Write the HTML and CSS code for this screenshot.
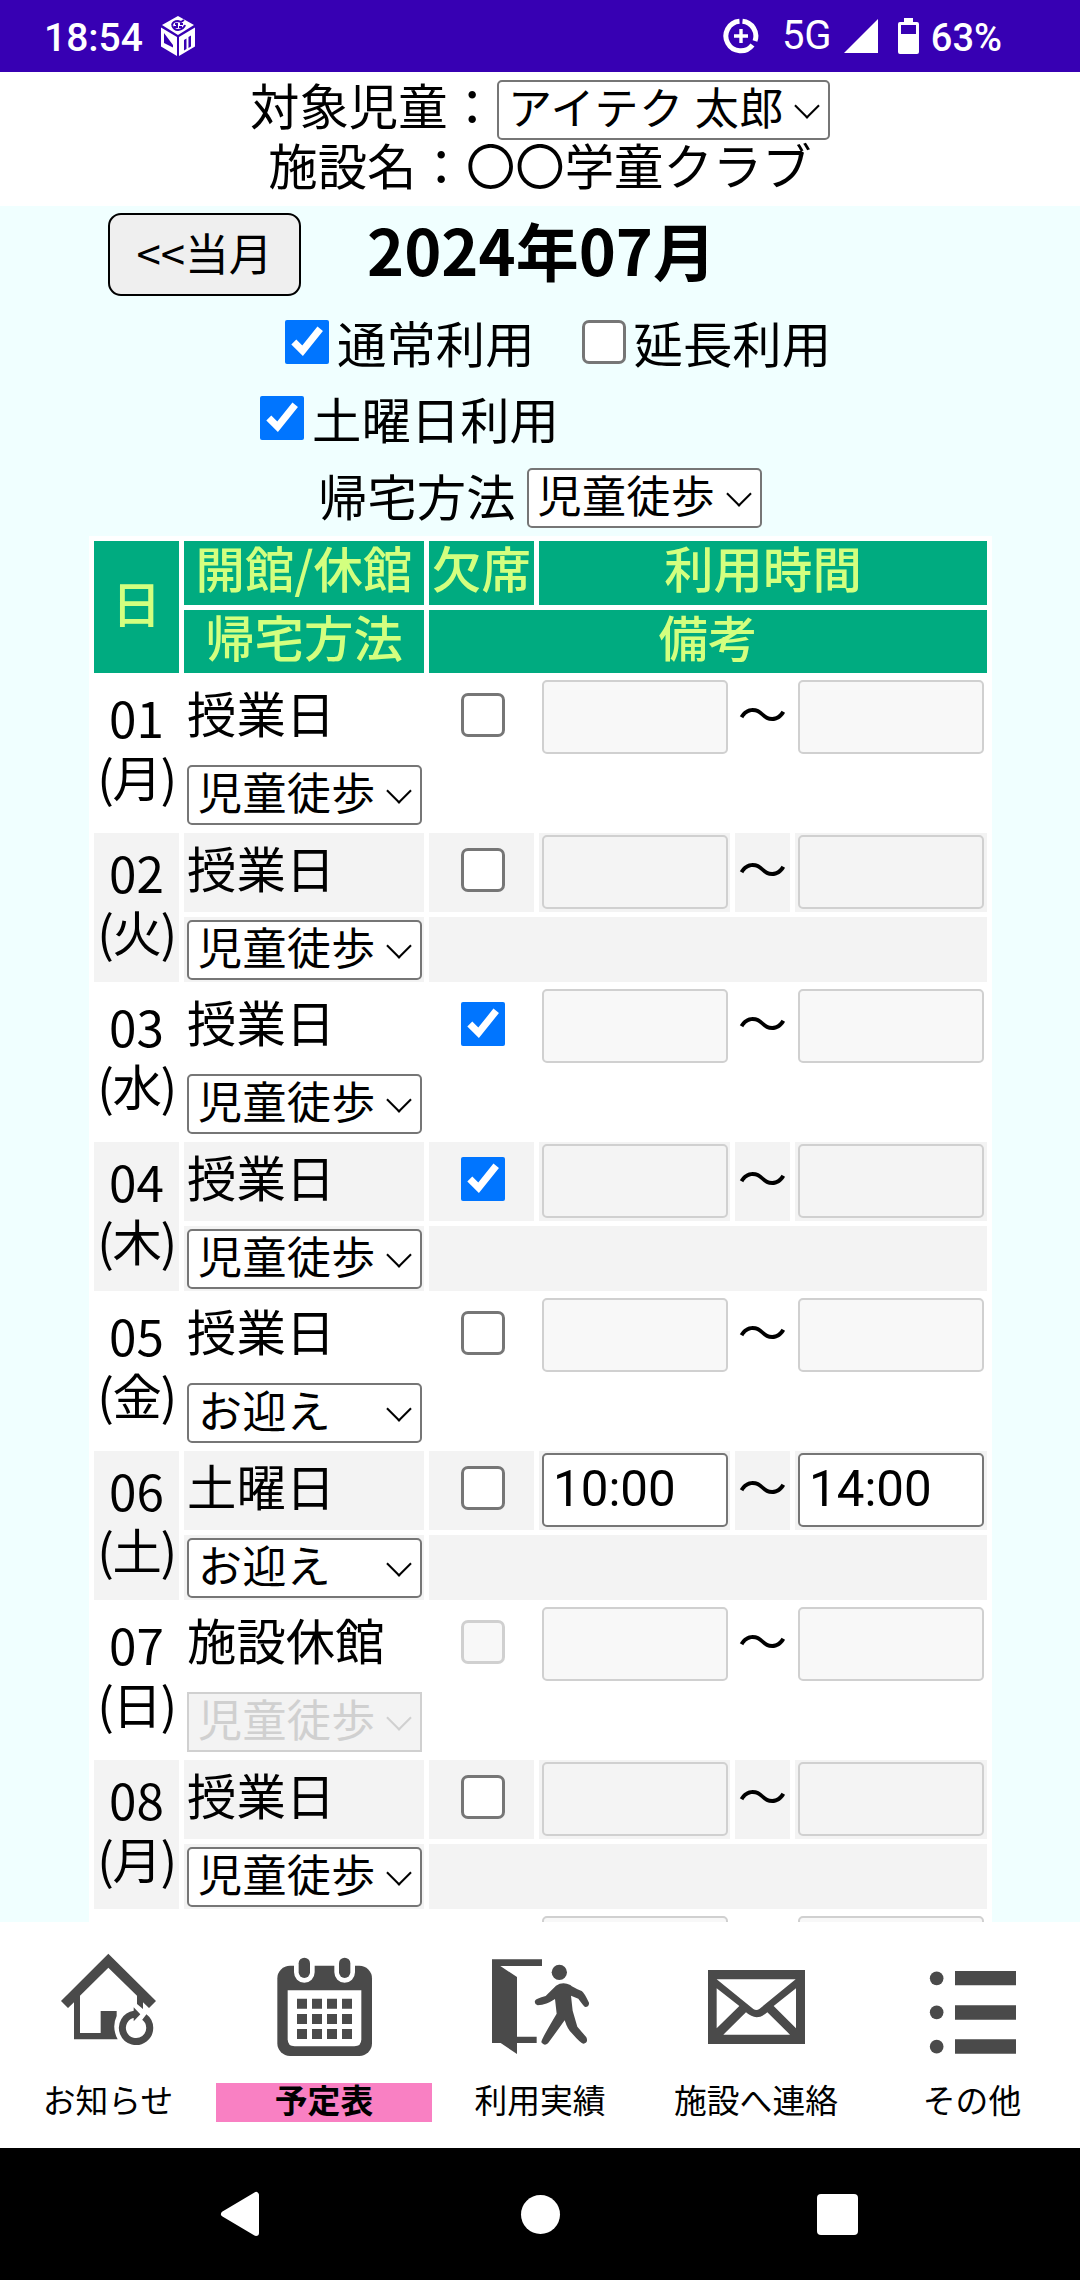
FILE: index.html
```html
<!DOCTYPE html>
<html lang="ja">
<head>
<meta charset="utf-8">
<meta name="viewport" content="width=device-width, initial-scale=1.0">
<title>予定表</title>
<link rel="stylesheet" href="styles.css">
</head>
<body>
<div class="statusbar">
  <span class="clock">18:54</span>
  <svg class="ic-cube" viewBox="0 0 36 40" width="36" height="40">
    <path fill="#fff" d="M18 0 34 9 18 19 2 9zM1 11.500 17 21v19L1 30.500zM35 11.500 19 21v19l16-9.500z"/>
    <path fill="#3700b3" d="M4 17v10l9 4.500V29zM24 24l2.500-1.500V33L24 34.500zM28.500 21l2.500-1.500v11L28.500 32z"/>
    <path fill="none" stroke="#3700b3" stroke-width="2" d="M12 9q1-4 6-4l3 1 3-2M12 9q2 5 6 5 6-1 7-5M15 8h2v3h-3M20 8h3M19 11h3"/>
  </svg>
  <svg class="ic-data" viewBox="0 0 36 36" width="36" height="36">
    <g fill="none" stroke="#fff">
      <path stroke-width="5" d="M16.500 3.300A14.800 14.800 0 1 0 29.500 27M19.500 3.300A14.800 14.800 0 0 1 32 23"/>
      <path stroke-width="3.400" d="M18 11v14M11 18h14"/>
    </g>
  </svg>
  <span class="net">5G</span>
  <svg class="ic-signal" viewBox="0 0 34 34" width="34" height="34"><path fill="#fff" d="M34 0v34H0z"/></svg>
  <svg class="ic-battery" viewBox="0 0 21 36" width="21" height="36">
    <path fill="#fff" fill-rule="evenodd" d="M6 0h9v4h4q2 0 2 2v28q0 2-2 2H2q-2 0-2-2V6q0-2 2-2h4zM3 7v9h15V7z"/>
  </svg>
  <span class="percent">63%</span>
</div>

<header class="head">
  <div class="head-line"><span>対象児童：</span><span class="select select-child"><select><option>アイテク 太郎</option></select></span></div>
  <div class="head-line"><span>施設名：〇〇学童クラブ</span></div>
</header>

<main class="main">
  <div class="month">
    <button class="btn-month">&lt;&lt;当月</button>
    <h1>2024年07月</h1>
  </div>
  <div class="option">
    <input type="checkbox" checked><label>通常利用</label>
    <input type="checkbox" class="second"><label>延長利用</label>
  </div>
  <div class="option option-sat">
    <input type="checkbox" checked><label>土曜日利用</label>
  </div>
  <div class="howto">
    <label>帰宅方法</label>
    <span class="select"><select><option>児童徒歩</option><option>お迎え</option></select></span>
  </div>

  <div class="schedule" id="schedule">
    <div class="th day">日</div>
    <div class="th">開館/休館</div>
    <div class="th">欠席</div>
    <div class="th time">利用時間</div>
    <div class="th">帰宅方法</div>
    <div class="th note">備考</div>
  </div>
</main>

<nav class="tabs">
  <a class="tab">
    <svg viewBox="0 99 648 480" width="216" height="160">
      <path fill="#4a4a4a" d="M325 191 468 333 447 354 429 337V357L411 342V317L325 233 240 317V429H302V363H350V378Q334 412 353 448H222V337L204 354 183 333z"/>
      <path fill="none" stroke="#4a4a4a" stroke-width="21" d="M433 381A41 41 0 1 1 403 373"/>
      <path fill="#4a4a4a" d="M401 352 421 373 401 394z"/>
    </svg>
    <span>お知らせ</span>
  </a>
  <a class="tab active">
    <svg viewBox="648 99 648 480" width="216" height="160">
      <rect x="832" y="227" width="284" height="271" rx="38" fill="#4a4a4a"/>
      <path fill="#fff" d="M863 301h221v147q0 21-21 21H884q-21 0-21-21z"/>
      <path fill="#fff" d="M882 220h62v27a31 31 0 0 1-62 0zM1003 220h62v27a31 31 0 0 1-62 0z"/>
      <rect x="896" y="203" width="34" height="61" rx="17" fill="#4a4a4a"/>
      <rect x="1017" y="203" width="34" height="61" rx="17" fill="#4a4a4a"/>
      <path fill="#4a4a4a" d="M891 326h30v30h-30zm45 0h30v30h-30zm45 0h30v30h-30zm45 0h30v30h-30zM891 372h30v30h-30zm45 0h30v30h-30zm45 0h30v30h-30zm45 0h30v30h-30zM891 417h30v30h-30zm45 0h30v30h-30zm45 0h30v30h-30zm45 0h30v30h-30z"/>
    </svg>
    <span>予定表</span>
  </a>
  <a class="tab">
    <svg viewBox="96 99 648 480" width="216" height="160">
      <path fill="#4a4a4a" d="M276 208H426V228H301L351 261V440H410V459H351V492L302 459H276z"/>
      <circle cx="478" cy="247" r="23" fill="#4a4a4a"/>
      <path fill="#4a4a4a" d="M468 287Q488 274 511 285Q517 291 545 303Q552 307 567 338Q568 351 556 351Q552 350 535 326L513 317 518 362 532 410 559 442Q566 458 550 461Q543 461 515 429Q503 419 494 391L444 460Q433 470 424 457Q422 451 470 371L465 327Q440 344 413 346Q402 343 405 332Q408 326 437 318z"/>
    </svg>
    <span>利用実績</span>
  </a>
  <a class="tab">
    <svg viewBox="744 99 648 480" width="216" height="160">
      <path fill="#4a4a4a" fill-rule="evenodd" d="M924 240H1215V462H924zM950 268 1060 357Q1069 363 1078 357L1187 268zM950 295V415L1018 348zM1188 295 1121 348 1188 415zM970 434H1170L1102 367Q1070 396 1038 367z"/>
    </svg>
    <span>施設へ連絡</span>
  </a>
  <a class="tab">
    <svg viewBox="252 99 648 480" width="216" height="160" fill="#4a4a4a">
      <circle cx="470" cy="265" r="20.500"/><path d="M525 243h183v43H525z"/>
      <circle cx="470" cy="367" r="20.500"/><path d="M525 346h183v43H525z"/>
      <circle cx="470" cy="470" r="20.500"/><path d="M525 448h183v43H525z"/>
    </svg>
    <span>その他</span>
  </a>
</nav>

<div class="softkeys">
  <svg viewBox="0 0 40 46" width="40" height="46"><path fill="#fff" stroke="#fff" stroke-width="6" stroke-linejoin="round" d="M4 23 36 4v38z"/></svg>
  <span class="key-home"></span>
  <span class="key-recent"></span>
</div>

<script>
  const days = [
    { date: "01", week: "月", kind: "授業日", how: "児童徒歩" },
    { date: "02", week: "火", kind: "授業日", how: "児童徒歩" },
    { date: "03", week: "水", kind: "授業日", how: "児童徒歩", absent: true },
    { date: "04", week: "木", kind: "授業日", how: "児童徒歩", absent: true },
    { date: "05", week: "金", kind: "授業日", how: "お迎え" },
    { date: "06", week: "土", kind: "土曜日", how: "お迎え", from: "10:00", to: "14:00" },
    { date: "07", week: "日", kind: "施設休館", how: "児童徒歩", closed: true },
    { date: "08", week: "月", kind: "授業日", how: "児童徒歩" }
  ];

  function timeInput(value) {
    return value ? `<input type="text" value="${value}">` : `<input type="text" disabled>`;
  }

  const schedule = document.getElementById("schedule");
  days.forEach((d, i) => {
    const alt = i % 2 ? " alt" : "";
    const dis = d.closed ? "disabled" : "";
    schedule.insertAdjacentHTML("beforeend", `
      <div class="td day${alt}"><div>${d.date}</div><div class="week">(${d.week})</div></div>
      <div class="td kind${alt}">${d.kind}</div>
      <div class="td absent${alt}"><input type="checkbox" ${d.absent ? "checked" : ""} ${dis}></div>
      <div class="td${alt}">${timeInput(d.from)}</div>
      <div class="td tilde${alt}">～</div>
      <div class="td${alt}">${timeInput(d.to)}</div>
      <div class="td how${alt}"><span class="select ${dis}"><select ${dis}><option>${d.how}</option></select></span></div>
      <div class="td note${alt}"></div>`);
  });
  // top edge of the next day's row
  schedule.insertAdjacentHTML("beforeend", `
    <div class="next-from">${timeInput()}</div>
    <div class="next-to">${timeInput()}</div>`);
</script>
</body>
</html>
```
FILE: styles.css
```css
* {
  box-sizing: border-box;
}
body {
  margin: 0;
  width: 1080px;
  height: 2280px;
  display: flex;
  flex-direction: column;
  overflow: hidden;
  background: #fff;
  color: #000;
  font-family: "Noto Sans CJK JP", sans-serif;
  font-size: 49.4px;
  line-height: 60px;
}

/* status bar */
.statusbar {
  height: 72px;
  flex-shrink: 0;
  display: flex;
  align-items: center;
  padding: 0 78px 0 44px;
  background: #3700b3;
  color: #fff;
  font-family: Roboto, sans-serif;
  font-size: 39px;
  font-weight: 500;
}
.clock { width: 116px; padding-top: 3px; }
.ic-data { margin-left: 527px; }
.net { width: 62px; margin-left: 23px; font-weight: 400; font-size: 40px; }
.ic-battery { margin-left: 20px; }
.percent { margin-left: 12px; padding-top: 3px; font-size: 38px; }

/* header */
.head {
  height: 134px;
  flex-shrink: 0;
  padding-top: 2px;
}
.head-line {
  height: 60px;
  display: flex;
  justify-content: center;
}
.head .select { margin-top: 6px; }

/* form parts */
.select {
  position: relative;
  display: block;
  width: 235px;
  height: 60px;
}
.select-child { width: 333px; }
.select::after {
  content: "";
  position: absolute;
  right: 14px;
  top: 17px;
  width: 16px;
  height: 16px;
  border: solid #000;
  border-width: 0 2px 2px 0;
  transform: rotate(45deg);
}
.select.disabled::after { border-color: #d0d0d0; }
select {
  appearance: none;
  display: block;
  width: 100%;
  height: 60px;
  padding: 0 0 8px 9px;
  border: 2px solid #767676;
  border-radius: 5px;
  background: #fff;
  color: #000;
  font-family: inherit;
  font-size: 44px;
  line-height: 48px;
  letter-spacing: 0.4px;
  opacity: 1;
}
.select-child select { letter-spacing: 0.8px; }
select:disabled {
  border-color: #d0d0d0;
  border-radius: 0;
  background: #f3f3f3;
  color: #d0d0d0;
}
input[type="checkbox"] {
  width: 44px;
  height: 44px;
  margin: 0;
  flex-shrink: 0;
}
input[type="checkbox"]:not(:checked) {
  appearance: none;
  border: 3px solid #767676;
  border-radius: 7px;
  background: #fff;
}
input[type="checkbox"]:not(:checked):disabled {
  border-color: #d0d0d0;
  background: #f8f8f8;
}
input[type="text"] {
  display: block;
  width: 186px;
  height: 74px;
  margin: 2px 0 0 3px;
  padding: 0 9px 1px;
  border: 2px solid #767676;
  border-radius: 5px;
  background: #fff;
  color: #000;
  font-family: Roboto, sans-serif;
  font-size: 49.3px;
}
input[type="text"]:disabled {
  border-color: #d0d0d0;
  background: #f8f8f8;
}
.alt input[type="text"]:disabled {
  background: #f4f4f4;
}

/* month and options */
.main {
  height: 1716px;
  flex-shrink: 0;
  overflow: hidden;
  background: #f0ffff;
}
.month {
  display: flex;
  height: 105px;
  padding: 7px 0 0 108px;
}
.btn-month {
  width: 193px;
  height: 83px;
  padding: 0 0 5px;
  border: 2px solid #000;
  border-radius: 13px;
  background: #efefef;
  color: #000;
  font-family: inherit;
  font-size: 43.8px;
}
h1 {
  margin: 0 0 0 66px;
  font-size: 63px;
  line-height: 71px;
  font-weight: 700;
}
.option {
  display: flex;
  align-items: center;
  height: 76px;
  padding: 0 0 14px 285px;
}
.option label { margin-left: 8px; }
.option .second { margin-left: 47px; }
.option-sat { padding-left: 260px; }
.howto {
  display: flex;
  height: 73px;
  padding: 5px 0 0 318px;
}
.howto label { line-height: 53px; }
.howto .select { margin-left: 11px; }

/* schedule */
.schedule {
  width: 903px;
  margin-left: 89px;
  padding: 5px;
  display: grid;
  grid-template-columns: 85px 240px 105px 191px 55px 192px;
  grid-template-rows: 64px 63px repeat(8, 79.25px 65.25px) 79.25px;
  gap: 5px;
  background: #fff;
}
.th {
  background: #00ab80;
  color: #d3ff7f;
  font-weight: 500;
  text-align: center;
  line-height: 52px;
}
.day {
  grid-row: span 2;
  text-align: center;
}
.th.day { line-height: 122px; }
.time { grid-column: span 3; }
.note { grid-column: span 4; }
.alt { background: #f3f3f3; }
.td.day { padding-top: 9px; }
.week {
  margin-top: -1px;
  letter-spacing: -1.5px;
}
.kind {
  padding: 4px 0 0 3px;
  white-space: nowrap;
}
.absent {
  display: flex;
  justify-content: center;
  padding: 15px 0 0 2px;
}
.tilde {
  padding-top: 4px;
  display: flex;
  justify-content: center;
}
.how { padding: 3px 0 0 3px; }
.next-from { grid-column: 4; }
.next-to { grid-column: 6; }

/* bottom tabs */
.tabs {
  height: 226px;
  flex-shrink: 0;
  display: grid;
  grid-template-columns: repeat(5, 216px);
  padding-top: 1px;
  background: #fff;
  font-size: 32.8px;
}
.tab svg { display: block; }
.tab span {
  display: block;
  height: 39px;
  line-height: 32px;
  text-align: center;
}
.tab.active span {
  background: #f980c3;
  font-weight: 700;
}

/* android keys */
.softkeys {
  height: 132px;
  flex-shrink: 0;
  display: flex;
  align-items: center;
  padding-left: 220px;
  background: #000;
}
.key-home {
  width: 39px;
  height: 39px;
  margin-left: 261px;
  border-radius: 50%;
  background: #fff;
}
.key-recent {
  width: 41px;
  height: 41px;
  margin-left: 257px;
  border-radius: 4px;
  background: #fff;
}
```
